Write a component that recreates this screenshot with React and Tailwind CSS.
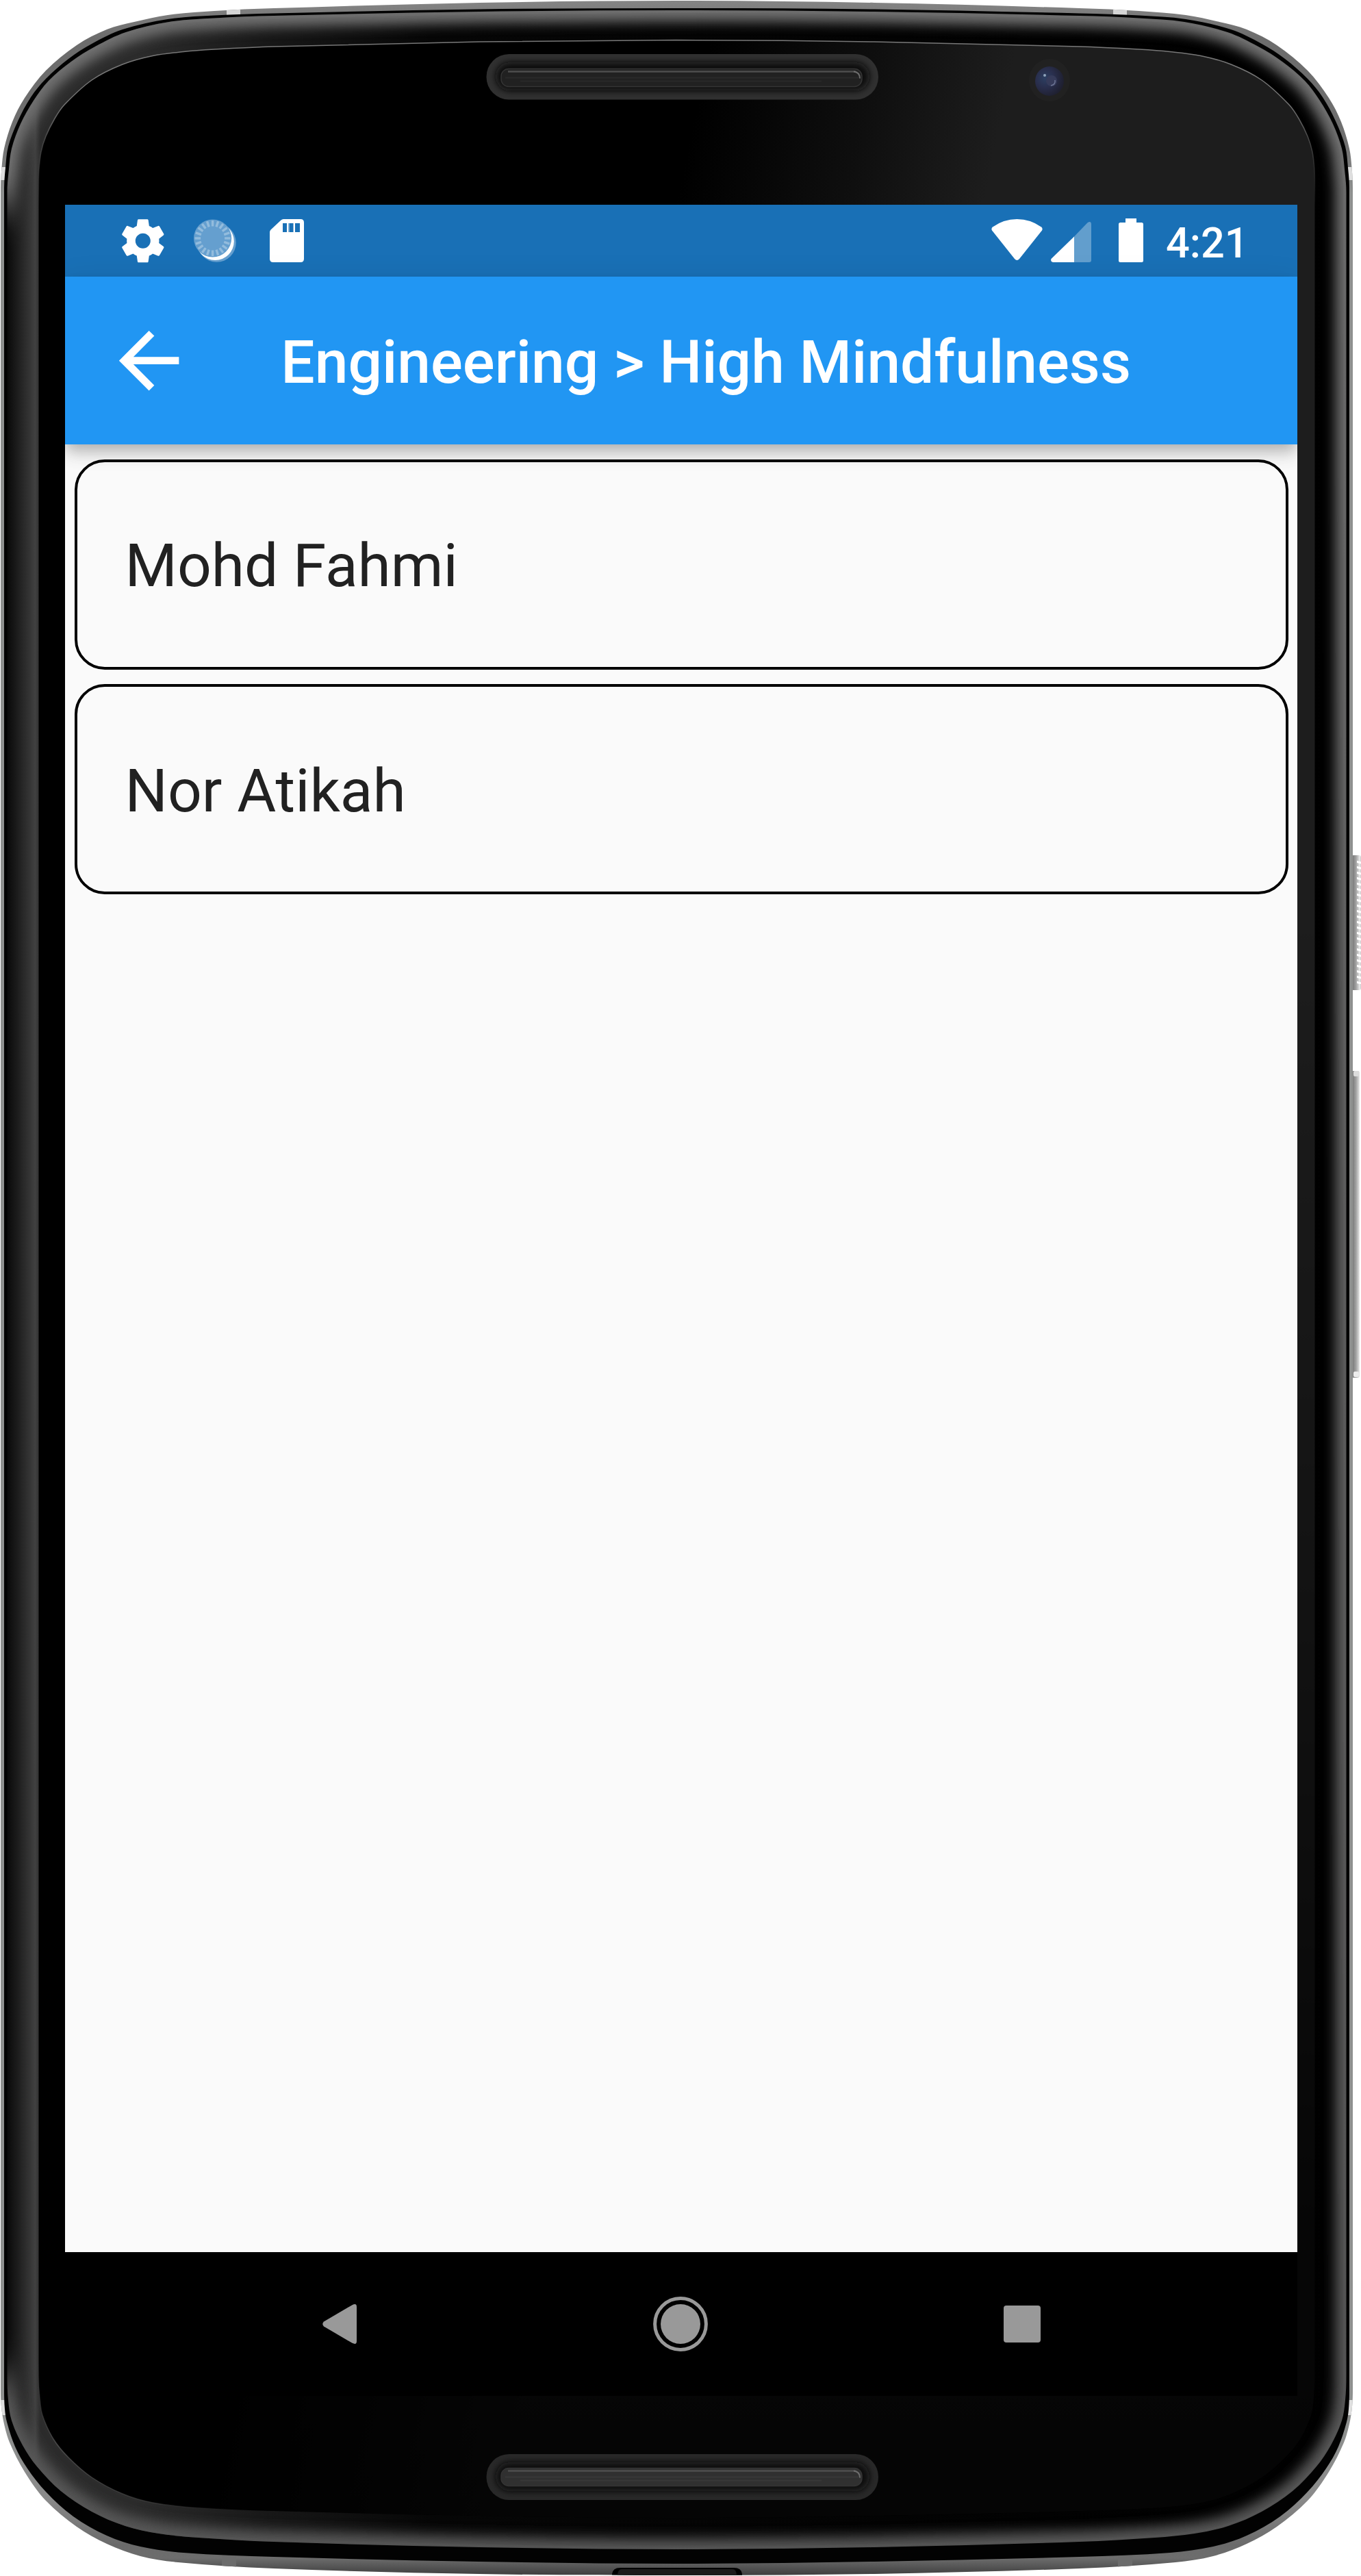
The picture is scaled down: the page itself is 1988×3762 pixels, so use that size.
import React from "react";

const AXIS = 988.5;

/* Left half of each closed contour of the handset, listed from top centre to bottom centre. */
const BODY = [
  [988, 1], [700, 4], [400, 12], [313, 16], [245, 22], [196, 32], [156, 43], [112, 66], [67, 103], [36, 143], [18, 178], [6, 217], [2.5, 245], [1, 275],
  [1, 3490], [2, 3515], [6, 3540], [14, 3567], [36, 3610], [67, 3652], [112, 3690], [156, 3715], [205, 3733], [260, 3742], [400, 3751], [700, 3759], [988, 3761],
];
const GROOVE = [
  [988, 12], [700, 13.5], [400, 19.5], [313, 22.5], [245, 28], [179, 43], [134, 64], [100, 86], [67, 115], [45, 142], [26, 177], [12, 214], [8, 245], [6, 275],
  [6, 3490], [7, 3518], [10, 3537], [22, 3573], [40, 3605], [67, 3639], [107, 3675], [156, 3703], [205, 3719], [268, 3728], [400, 3734], [700, 3741], [988, 3744],
];
const BEZEL = [
  [988, 15], [700, 17], [400, 23], [313, 26.5], [247, 32], [184, 47], [139, 68], [104, 90], [71, 118], [49, 147], [30, 181], [17, 217], [13, 247], [10.5, 280],
  [10.5, 3470], [12, 3505], [17, 3535], [33, 3571], [54, 3602], [89, 3638], [134, 3668], [183, 3689], [232, 3700], [290, 3706], [400, 3712], [700, 3720], [988, 3723],
];
const GLASS = [
  [988, 58.5], [700, 61], [400, 68], [313, 72], [268, 75.5], [223, 81.5], [179, 94], [134, 117], [94, 153], [80, 173], [67, 199], [60, 222], [57, 248], [56.5, 275],
  [56.5, 3470], [58, 3500], [62, 3527], [78, 3562], [100, 3589], [134, 3618], [179, 3642], [223, 3655], [290, 3662.5], [400, 3667], [700, 3674], [988, 3677],
];

/* Mirrors a half contour about the axis and joins its points with smooth curves. */
function contour(half) {
  const pts = [...half, ...half.slice(1, -1).reverse().map(([x, y]) => [2 * AXIS - x, y])];
  const n = pts.length;
  const at = (i) => pts[(i + n) % n];
  const tangent = (a, b, len) => {
    const l = Math.hypot(b[0] - a[0], b[1] - a[1]);
    return [((b[0] - a[0]) / l) * (len / 3), ((b[1] - a[1]) / l) * (len / 3)];
  };
  let d = `M${at(0)[0]},${at(0)[1]}`;
  for (let i = 0; i < n; i++) {
    const [p0, p1, p2, p3] = [at(i - 1), at(i), at(i + 1), at(i + 2)];
    const len = Math.hypot(p2[0] - p1[0], p2[1] - p1[1]);
    if (len > 1500) {
      d += `L${p2[0]},${p2[1]}`;
      continue;
    }
    const a = tangent(p0, p2, len);
    const b = tangent(p1, p3, len);
    d += `C${(p1[0] + a[0]).toFixed(1)},${(p1[1] + a[1]).toFixed(1)} ${(p2[0] - b[0]).toFixed(1)},${(p2[1] - b[1]).toFixed(1)} ${p2[0]},${p2[1]}`;
  }
  return d + "Z";
}

const bodyPath = contour(BODY);
const groovePath = contour(GROOVE);
const bezelPath = contour(BEZEL);
const glassPath = contour(GLASS);

function Speaker({ y, h, innerTop, fill, edge }) {
  return (
    <g>
      <rect x="710.5" y={y} width="572.5" height={h} rx="33" fill={edge} />
      <rect x="724" y={y + 12} width="546" height={h - 25} rx="21" fill="#0c0c0c" filter="url(#soft)" />
      <rect x="732" y={innerTop} width="527" height="26" rx="11" fill={fill} stroke="#343434" strokeWidth="1.5" />
      <path d={`M742,${innerTop + 4}H1250`} stroke="#4e4e4e" strokeWidth="2.5" />
      <path d={`M738,${innerTop + 13}H1254M760,${innerTop + 18}H1200`} stroke="#fff" strokeOpacity="0.04" strokeWidth="2" />
      <path d={`M1247,${innerTop + 4}q9,1 9,10`} fill="none" stroke="#6d6d6d" strokeWidth="2" />
    </g>
  );
}

function Handset() {
  return (
    <svg className="absolute inset-0" width="1988" height="3762" viewBox="0 0 1988 3762">
      <defs>
        <linearGradient id="metal" x1="0" y1="0" x2="0" y2="3762" gradientUnits="userSpaceOnUse">
          <stop offset="0" stopColor="#858585" />
          <stop offset="0.015" stopColor="#6c6c6c" />
          <stop offset="0.055" stopColor="#6f6f6f" />
          <stop offset="0.075" stopColor="#8e908f" />
          <stop offset="0.94" stopColor="#8e908f" />
          <stop offset="0.97" stopColor="#8a8a8a" />
          <stop offset="0.988" stopColor="#6a6a6a" />
          <stop offset="0.993" stopColor="#6d6d6d" />
          <stop offset="1" stopColor="#3c3c3c" />
        </linearGradient>
        <linearGradient id="bezelBase" x1="0" y1="0" x2="1977" y2="0" gradientUnits="userSpaceOnUse">
          <stop offset="0.0055" stopColor="#0a0a0a" />
          <stop offset="0.013" stopColor="#1b1b1b" />
          <stop offset="0.026" stopColor="#414141" />
          <stop offset="0.03" stopColor="#2c2c2c" />
          <stop offset="0.1" stopColor="#2c2c2c" />
          <stop offset="0.2" stopColor="#171717" />
          <stop offset="0.32" stopColor="#060606" />
          <stop offset="1" stopColor="#000" />
        </linearGradient>
        <linearGradient id="glare" x1="1050" y1="0" x2="1480" y2="90" gradientUnits="userSpaceOnUse">
          <stop offset="0" stopColor="#1d1d1d" stopOpacity="0" />
          <stop offset="0.55" stopColor="#1d1d1d" stopOpacity="0.5" />
          <stop offset="1" stopColor="#1d1d1d" />
        </linearGradient>
        <linearGradient id="glareFade" x1="0" y1="0" x2="0" y2="3762" gradientUnits="userSpaceOnUse">
          <stop offset="0" stopColor="#fff" />
          <stop offset="0.35" stopColor="#fff" />
          <stop offset="0.6" stopColor="#aaa" />
          <stop offset="0.86" stopColor="#383838" />
          <stop offset="1" stopColor="#2a2a2a" />
        </linearGradient>
        <mask id="glareMask" maskUnits="userSpaceOnUse" x="0" y="0" width="1988" height="3762">
          <rect width="1988" height="3762" fill="url(#glareFade)" />
        </mask>
        <linearGradient id="rim" x1="0" y1="0" x2="0" y2="3762" gradientUnits="userSpaceOnUse">
          <stop offset="0" stopColor="#707070" />
          <stop offset="0.5" stopColor="#5e5e5e" />
          <stop offset="1" stopColor="#555" />
        </linearGradient>
        <linearGradient id="glassLine" x1="0" y1="0" x2="0" y2="3762" gradientUnits="userSpaceOnUse">
          <stop offset="0" stopColor="#777" />
          <stop offset="0.04" stopColor="#777" />
          <stop offset="0.08" stopColor="#444" stopOpacity="0" />
          <stop offset="1" stopColor="#222" stopOpacity="0" />
        </linearGradient>
        <linearGradient id="glassLineLow" x1="56" y1="3450" x2="360" y2="3670" gradientUnits="userSpaceOnUse">
          <stop offset="0" stopColor="#555" stopOpacity="0" />
          <stop offset="0.25" stopColor="#555" stopOpacity="0.8" />
          <stop offset="0.7" stopColor="#444" stopOpacity="0.6" />
          <stop offset="1" stopColor="#222" stopOpacity="0" />
        </linearGradient>
        <radialGradient id="lens" cx="0.35" cy="0.4" r="0.65">
          <stop offset="0" stopColor="#2c3f62" />
          <stop offset="0.5" stopColor="#292e4c" />
          <stop offset="1" stopColor="#1f2030" />
        </radialGradient>
        <linearGradient id="button" x1="1976" y1="0" x2="1988" y2="0" gradientUnits="userSpaceOnUse">
          <stop offset="0" stopColor="#7c7c7c" />
          <stop offset="0.4" stopColor="#a2a2a2" />
          <stop offset="0.65" stopColor="#c8c8c8" />
          <stop offset="0.85" stopColor="#ededed" />
          <stop offset="1" stopColor="#c4c4c4" />
        </linearGradient>
        <pattern id="knurl" width="12" height="8" patternUnits="userSpaceOnUse">
          <path d="M0,2L12,5" stroke="#fff" strokeWidth="3" />
        </pattern>
        <filter id="soft" x="-10%" y="-60%" width="120%" height="220%">
          <feGaussianBlur stdDeviation="5" />
        </filter>
        <filter id="rimBlur" filterUnits="userSpaceOnUse" x="-60" y="-60" width="2108" height="3882">
          <feGaussianBlur stdDeviation="9" />
        </filter>
        <filter id="maskBlur" filterUnits="userSpaceOnUse" x="-200" y="0" width="2400" height="3762">
          <feGaussianBlur stdDeviation="28" />
        </filter>
        <mask id="rimMask" maskUnits="userSpaceOnUse" x="0" y="0" width="1988" height="3762">
          <rect width="1988" height="3762" fill="#fff" />
          <rect x="-120" y="300" width="190" height="3170" fill="#000" filter="url(#maskBlur)" />
        </mask>
        <clipPath id="bezelClip">
          <path d={bezelPath} />
        </clipPath>
        <clipPath id="bodyClip">
          <path d={bodyPath} />
        </clipPath>
        <clipPath id="lowerLeft">
          <rect x="0" y="3400" width="400" height="362" />
        </clipPath>
      </defs>

      {/* side buttons */}
      <rect x="1974" y="1249" width="14" height="197" rx="3" fill="url(#button)" />
      <rect x="1982" y="1257" width="6" height="180" fill="url(#knurl)" />
      <rect x="1974" y="1564" width="12" height="448" rx="3" fill="url(#button)" />
      <rect x="1977" y="1564" width="8" height="8" rx="2" fill="#dcdcdc" />
      <rect x="1977" y="2003" width="8" height="8" rx="2" fill="#ececec" />

      {/* metal band, antenna gaps and charging port */}
      <path d={bodyPath} fill="url(#metal)" />
      <g clipPath="url(#bodyClip)">
        <path d="M331,0H351V40H331ZM1626,0H1646V40H1626Z" fill="#d6d6d6" />
        <path d="M0,244H12V263H0ZM1965,244H1977V263H1965ZM0,3505H14V3527H0ZM1963,3505H1977V3527H1963Z" fill="#dedede" />
        <path d="M324,3725H345V3762H324ZM1633,3725H1654V3762H1633Z" fill="#6b6b6b" />
        <path d="M894,3762v-3q1,-9 12,-9h166q11,0 12,9v3z" fill="#000" />
        <path d="M902,3762q0,-10 6,-10h162q6,0 6,10z" fill="#1b1b1b" />
      </g>

      <path d={groovePath} fill="#020202" />
      <path d={bezelPath} fill="url(#bezelBase)" />
      <g clipPath="url(#bezelClip)">
        <g mask="url(#rimMask)">
          <path d={bezelPath} fill="none" stroke="url(#rim)" strokeWidth="32" filter="url(#rimBlur)" />
          <path d={bezelPath} fill="none" stroke="url(#rim)" strokeWidth="8" strokeOpacity="0.5" />
        </g>
      </g>

      <path d={glassPath} fill="#000" />
      <g mask="url(#glareMask)">
        <path d={glassPath} fill="url(#glare)" />
      </g>
      <path d={glassPath} fill="none" stroke="url(#glassLine)" strokeWidth="1.5" />
      <path d={glassPath} fill="none" stroke="url(#glassLineLow)" strokeWidth="1.5" clipPath="url(#lowerLeft)" />

      {/* front camera */}
      <ellipse cx="1533" cy="117" rx="30" ry="31" fill="#212121" />
      <ellipse cx="1533" cy="118.5" rx="21" ry="21.5" fill="url(#lens)" />
      <circle cx="1536" cy="118" r="8" fill="#363b5a" />
      <circle cx="1526" cy="110" r="2" fill="#8fa3bb" />
      <path d="M1541,117q1,7 -6,8" fill="none" stroke="#6d7594" strokeWidth="1.5" />

      {/* speaker grilles */}
      <Speaker y={79} h={66.5} innerTop={100.5} fill="#212121" edge="#303030" />
      <Speaker y={3584} h={67} innerTop={3604.5} fill="#303030" edge="#282828" />
    </svg>
  );
}

function GearIcon() {
  return (
    <svg className="size-[75.6px]" viewBox="0 0 24 24" fill="#fff">
      <path d="M19.43 12.98c.04-.32.07-.64.07-.98s-.03-.66-.07-.98l2.11-1.65c.19-.15.24-.42.12-.64l-2-3.46c-.12-.22-.39-.3-.61-.22l-2.49 1c-.52-.4-1.08-.73-1.69-.98l-.38-2.65C14.46 2.18 14.25 2 14 2h-4c-.25 0-.46.18-.49.42l-.38 2.65c-.61.25-1.17.59-1.69.98l-2.49-1c-.23-.09-.49 0-.61.22l-2 3.46c-.13.22-.07.49.12.64l2.11 1.65c-.04.32-.07.65-.07.98s.03.66.07.98l-2.11 1.65c-.19.15-.24.42-.12.64l2 3.46c.12.22.39.3.61.22l2.49-1c.52.4 1.08.73 1.69.98l.38 2.65c.03.24.24.42.49.42h4c.25 0 .46-.18.49-.42l.38-2.65c.61-.25 1.17-.59 1.69-.98l2.49 1c.23.09.49 0 .61-.22l2-3.46c.12-.22.07-.49-.12-.64l-2.11-1.65zM12 15.5c-1.93 0-3.5-1.57-3.5-3.5s1.57-3.5 3.5-3.5 3.5 1.57 3.5 3.5-1.57 3.5-3.5 3.5z" />
    </svg>
  );
}

function SyncDiscIcon() {
  const ticks = Array.from({ length: 20 }, (_, i) => i * 18);
  return (
    <svg className="h-[63px] w-[62px]" viewBox="0 0 62 63">
      <circle cx="33.5" cy="34.5" r="28.3" fill="#659fcf" />
      <circle cx="31.3" cy="32.5" r="27.5" fill="#fff" />
      <circle cx="27.6" cy="28" r="27.6" fill="#659fcf" />
      {ticks.map((a) => (
        <path key={a} d="M27.6 2V10.5" stroke="#93bcdd" strokeWidth="3.4" transform={`rotate(${a} 27.6 28)`} />
      ))}
    </svg>
  );
}

function SdCardIcon() {
  return (
    <svg className="h-[63px] w-[50px]" viewBox="0 0 50 63">
      <path d="M20 0H45Q50 0 50 5V58Q50 63 45 63H5Q0 63 0 58V19Q0 17 1.500 15.500L16.500 1.500Q18 0 20 0Z" fill="#fff" />
      <path d="M19 6H25V19H19ZM28.500 6H34V19H28.500ZM37 6H44V19H37Z" fill="#1970b6" />
      <path d="M27 6H28.500V19H27ZM34 6H35V19H34Z" fill="#1970b6" fillOpacity="0.5" />
    </svg>
  );
}

function WifiIcon() {
  return (
    <svg className="h-[60px] w-[75px]" viewBox="0 0 75 60">
      <path d="M1 16.500Q-0.500 13.500 2 11.500Q18 0 37.500 0T73 11.500Q75.500 13.500 74 16.500L41 58Q37.500 62 34 58Z" fill="#fff" />
    </svg>
  );
}

function SignalIcon() {
  return (
    <svg className="h-[59px] w-[59px]" viewBox="0 0 59 59">
      <path d="M34 21.500L53.500 1.200Q59 -2 59 4V56Q59 59 56 59H34Z" fill="#fff" fillOpacity="0.32" />
      <path d="M34 21.500V59H3Q-1 58 0.500 54Z" fill="#fff" />
    </svg>
  );
}

function BatteryIcon() {
  return (
    <svg className="h-[64px] w-[36px]" viewBox="0 0 36 64">
      <path d="M10 0H26V6H33.500Q36 6 36 8.500V61.500Q36 64 33.500 64H2.500Q0 64 0 61.500V8.500Q0 6 2.500 6H10Z" fill="#fff" />
    </svg>
  );
}

function StatusBar() {
  return (
    <div className="flex h-[105px] justify-between bg-[#1970b6]">
      <div className="flex items-center pl-[76px]">
        <GearIcon />
        <div className="ml-[36px]">
          <SyncDiscIcon />
        </div>
        <div className="ml-[49px]">
          <SdCardIcon />
        </div>
      </div>
      <div className="flex items-start pr-[78px] pt-[20px]">
        <div className="pt-px">
          <WifiIcon />
        </div>
        <div className="ml-[12px] pt-[5px]">
          <SignalIcon />
        </div>
        <div className="ml-[40px]">
          <BatteryIcon />
        </div>
        <span className="ml-[33px] w-[114px] whitespace-nowrap text-[61.25px] leading-[72px] font-medium text-white">4:21</span>
      </div>
    </div>
  );
}

function AppBar({ title }) {
  return (
    <header className="relative z-10 flex h-[245px] items-center bg-[#2196f3] pl-[57px] shadow-[0_9px_18px_-4px_rgba(0,0,0,0.2),0_18px_22px_0_rgba(0,0,0,0.10),0_4px_40px_0_rgba(0,0,0,0.08)]">
      <svg className="size-[131.25px]" viewBox="0 0 24 24" fill="#fff">
        <path d="M20 11H7.830l5.590-5.590L12 4l-8 8 8 8 1.410-1.410L7.830 13H20v-2z" />
      </svg>
      <h1 className="ml-[127px] whitespace-nowrap pt-[5px] text-[87.5px] leading-[103px] font-medium text-white">{title}</h1>
    </header>
  );
}

function PersonTile({ name }) {
  return (
    <li className="flex h-[307px] items-center rounded-[44px] border-[4.4px] border-black pl-[70px]">
      <span className="pt-[5px] text-[87.5px] leading-[103px] text-[#212121]">{name}</span>
    </li>
  );
}

function NavBar() {
  return (
    <nav className="flex h-[210px] items-center bg-black">
      <svg className="ml-[376px] h-[58px] w-[50px]" viewBox="0 0 50 58">
        <path d="M43.500 1.200Q50 -2 50 4V54Q50 60 43.500 56.800L2 32.500Q-1.500 29 2 25.500Z" fill="#999" />
      </svg>
      <svg className="ml-[433px] size-[80px]" viewBox="0 0 80 80">
        <circle cx="40" cy="40" r="37.400" fill="none" stroke="#999" strokeWidth="5" />
        <circle cx="40" cy="40" r="29" fill="#999" />
      </svg>
      <div className="ml-[432px] size-[53.5px] rounded-[4px] bg-[#999]" />
    </nav>
  );
}

export default function App() {
  const people = ["Mohd Fahmi", "Nor Atikah"];
  return (
    <div className="relative h-[3762px] w-[1988px] overflow-hidden bg-white font-['Roboto',sans-serif]">
      <Handset />
      <div className="relative pl-[95px] pt-[299px]">
        <div className="flex h-[3200px] w-[1800px] flex-col overflow-hidden">
          <StatusBar />
          <AppBar title="Engineering > High Mindfulness" />
          <main className="relative flex-1 bg-[#fafafa]">
            <ul className="flex flex-col gap-[21.5px] px-[13.5px] pt-[21.5px]">
              {people.map((name) => (
                <PersonTile key={name} name={name} />
              ))}
            </ul>
          </main>
          <NavBar />
        </div>
      </div>
    </div>
  );
}
